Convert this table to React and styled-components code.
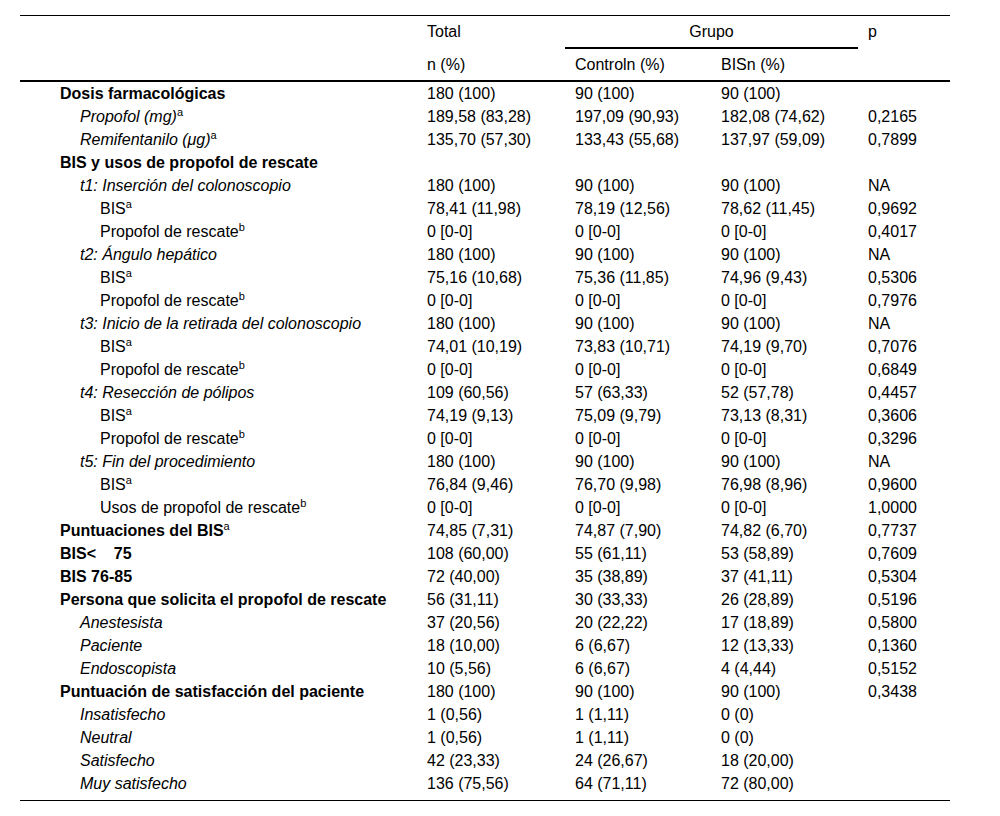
import React from "react";
import styled, { createGlobalStyle } from "styled-components";

const GlobalStyle = createGlobalStyle`
  html, body {
    margin: 0;
    padding: 0;
    background: #fff;
  }
  body {
    font-family: "Liberation Sans", Arial, sans-serif;
    color: #000;
  }
`;

// kind: "head" = bold section, "sub" = italic, "item" = plain deeper indent
const rows = [
  { kind: "head", label: "Dosis farmacológicas", v: ["180 (100)", "90 (100)", "90 (100)", ""] },
  { kind: "sub", label: "Propofol (mg)", sup: "a", v: ["189,58 (83,28)", "197,09 (90,93)", "182,08 (74,62)", "0,2165"] },
  { kind: "sub", label: "Remifentanilo (μg)", sup: "a", v: ["135,70 (57,30)", "133,43 (55,68)", "137,97 (59,09)", "0,7899"] },
  { kind: "head", label: "BIS y usos de propofol de rescate", v: ["", "", "", ""] },
  { kind: "sub", label: "t1: Inserción del colonoscopio", v: ["180 (100)", "90 (100)", "90 (100)", "NA"] },
  { kind: "item", label: "BIS", sup: "a", v: ["78,41 (11,98)", "78,19 (12,56)", "78,62 (11,45)", "0,9692"] },
  { kind: "item", label: "Propofol de rescate", sup: "b", v: ["0 [0-0]", "0 [0-0]", "0 [0-0]", "0,4017"] },
  { kind: "sub", label: "t2: Ángulo hepático", v: ["180 (100)", "90 (100)", "90 (100)", "NA"] },
  { kind: "item", label: "BIS", sup: "a", v: ["75,16 (10,68)", "75,36 (11,85)", "74,96 (9,43)", "0,5306"] },
  { kind: "item", label: "Propofol de rescate", sup: "b", v: ["0 [0-0]", "0 [0-0]", "0 [0-0]", "0,7976"] },
  { kind: "sub", label: "t3: Inicio de la retirada del colonoscopio", v: ["180 (100)", "90 (100)", "90 (100)", "NA"] },
  { kind: "item", label: "BIS", sup: "a", v: ["74,01 (10,19)", "73,83 (10,71)", "74,19 (9,70)", "0,7076"] },
  { kind: "item", label: "Propofol de rescate", sup: "b", v: ["0 [0-0]", "0 [0-0]", "0 [0-0]", "0,6849"] },
  { kind: "sub", label: "t4: Resección de pólipos", v: ["109 (60,56)", "57 (63,33)", "52 (57,78)", "0,4457"] },
  { kind: "item", label: "BIS", sup: "a", v: ["74,19 (9,13)", "75,09 (9,79)", "73,13 (8,31)", "0,3606"] },
  { kind: "item", label: "Propofol de rescate", sup: "b", v: ["0 [0-0]", "0 [0-0]", "0 [0-0]", "0,3296"] },
  { kind: "sub", label: "t5: Fin del procedimiento", v: ["180 (100)", "90 (100)", "90 (100)", "NA"] },
  { kind: "item", label: "BIS", sup: "a", v: ["76,84 (9,46)", "76,70 (9,98)", "76,98 (8,96)", "0,9600"] },
  { kind: "item", label: "Usos de propofol de rescate", sup: "b", v: ["0 [0-0]", "0 [0-0]", "0 [0-0]", "1,0000"] },
  { kind: "head", label: "Puntuaciones del BIS", sup: "a", v: ["74,85 (7,31)", "74,87 (7,90)", "74,82 (6,70)", "0,7737"] },
  { kind: "head", label: "BIS<\u00a0\u00a0\u00a0\u00a075", v: ["108 (60,00)", "55 (61,11)", "53 (58,89)", "0,7609"] },
  { kind: "head", label: "BIS 76-85", v: ["72 (40,00)", "35 (38,89)", "37 (41,11)", "0,5304"] },
  { kind: "head", label: "Persona que solicita el propofol de rescate", v: ["56 (31,11)", "30 (33,33)", "26 (28,89)", "0,5196"] },
  { kind: "sub", label: "Anestesista", v: ["37 (20,56)", "20 (22,22)", "17 (18,89)", "0,5800"] },
  { kind: "sub", label: "Paciente", v: ["18 (10,00)", "6 (6,67)", "12 (13,33)", "0,1360"] },
  { kind: "sub", label: "Endoscopista", v: ["10 (5,56)", "6 (6,67)", "4 (4,44)", "0,5152"] },
  { kind: "head", label: "Puntuación de satisfacción del paciente", v: ["180 (100)", "90 (100)", "90 (100)", "0,3438"] },
  { kind: "sub", label: "Insatisfecho", v: ["1 (0,56)", "1 (1,11)", "0 (0)", ""] },
  { kind: "sub", label: "Neutral", v: ["1 (0,56)", "1 (1,11)", "0 (0)", ""] },
  { kind: "sub", label: "Satisfecho", v: ["42 (23,33)", "24 (26,67)", "18 (20,00)", ""] },
  { kind: "sub", label: "Muy satisfecho", v: ["136 (75,56)", "64 (71,11)", "72 (80,00)", ""] },
];

const indent = { head: 40, sub: 60, item: 80 };

export default function App() {
  return (
    <>
      <GlobalStyle />
      <Page>
        <Table>
          <colgroup>
            <col style={{ width: 397 }} />
            <col style={{ width: 148 }} />
            <col style={{ width: 146 }} />
            <col style={{ width: 147 }} />
            <col style={{ width: 92 }} />
          </colgroup>
          <thead>
            <tr>
              <HeadCell />
              <HeadCell>Total</HeadCell>
              <GroupCell colSpan={2}>Grupo</GroupCell>
              <HeadCell>p</HeadCell>
            </tr>
            <tr>
              <SubHeadCell />
              <SubHeadCell>n (%)</SubHeadCell>
              <SubHeadCell>Controln (%)</SubHeadCell>
              <SubHeadCell>BISn (%)</SubHeadCell>
              <SubHeadCell />
            </tr>
          </thead>
          <tbody>
            {rows.map((r, i) => (
              <Row key={i} $last={i === rows.length - 1}>
                <LabelCell $kind={r.kind} $indent={indent[r.kind]}>
                  {r.label}
                  {r.sup && <Sup>{r.sup}</Sup>}
                </LabelCell>
                {r.v.map((val, j) => (
                  <ValueCell key={j}>{val}</ValueCell>
                ))}
              </Row>
            ))}
          </tbody>
        </Table>
      </Page>
    </>
  );
}

const Page = styled.div`
  padding: 15px 50px 0 20px;
  width: 930px;
`;

const Table = styled.table`
  width: 930px;
  table-layout: fixed;
  border-collapse: separate;
  border-spacing: 0;
  border-top: 1px solid #000;
  font-size: 16px;
`;

const HeadCell = styled.td`
  padding: 0 0 0 10px;
  height: 33px;
  line-height: 31px;
  vertical-align: top;
  text-align: left;
  white-space: nowrap;
`;

const GroupCell = styled.td`
  padding: 0;
  height: 31px;
  line-height: 31px;
  vertical-align: top;
  text-align: center;
  border-bottom: 2px solid #000;
`;

const SubHeadCell = styled.td`
  padding: 0 0 0 10px;
  height: 31px;
  line-height: 31px;
  vertical-align: top;
  white-space: nowrap;
  border-bottom: 2px solid #000;
`;

const Row = styled.tr`
  td {
    height: ${(p) => (p.$last ? "28px" : "23px")};
    border-bottom: ${(p) => (p.$last ? "1px solid #000" : "none")};
  }
`;

const LabelCell = styled.td`
  padding: 0 0 0 ${(p) => p.$indent}px;
  line-height: 23px;
  vertical-align: top;
  white-space: nowrap;
  font-weight: ${(p) => (p.$kind === "head" ? 700 : 400)};
  font-style: ${(p) => (p.$kind === "sub" ? "italic" : "normal")};
`;

const ValueCell = styled.td`
  padding: 0 0 0 10px;
  line-height: 23px;
  vertical-align: top;
  white-space: nowrap;
`;

const Sup = styled.sup`
  font-size: 11px;
  line-height: 0;
  vertical-align: 6px;
  font-style: normal;
  font-weight: 400;
`;
